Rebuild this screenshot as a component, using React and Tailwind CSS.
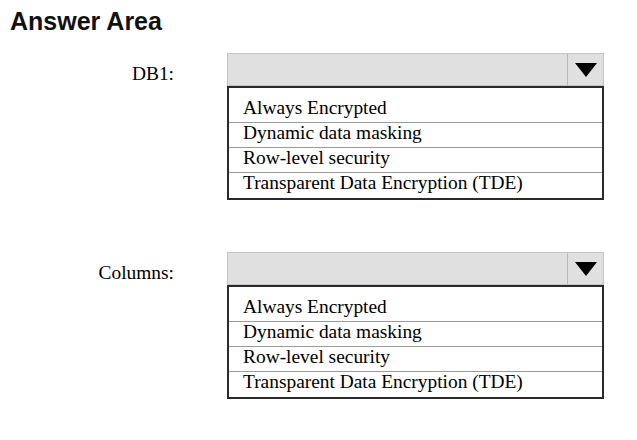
import React from 'react'

const OPTIONS = [
  'Always Encrypted',
  'Dynamic data masking',
  'Row-level security',
  'Transparent Data Encryption (TDE)',
]

function Dropdown() {
  return (
    <div className="w-[377px]">
      <div className="flex h-[33px] border border-[#c4c4c4] bg-[#e0e0e0]">
        <div className="flex-1" />
        <div className="flex w-[36px] items-center justify-center border-l border-[#b8b8b8]">
          <svg width="22" height="14" viewBox="0 0 22 14">
            <polygon points="0,0 22,0 11,14" fill="#000" />
          </svg>
        </div>
      </div>
      <div className="border-2 border-[#2a2a2a] pt-[10px]">
        {OPTIONS.map((opt, i) => (
          <div
            key={opt}
            className={
              'h-[25px] pl-[14px] text-[19.4px] leading-[20px] text-black ' +
              (i < OPTIONS.length - 1 ? 'border-b border-[#9a9a9a]' : '')
            }
          >
            {opt}
          </div>
        ))}
      </div>
    </div>
  )
}

function Row({ label }) {
  return (
    <div className="flex gap-[53px]">
      <div className="w-[174px] pt-[11px] text-right text-[19.4px] leading-[20px] text-black">
        {label}
      </div>
      <Dropdown />
    </div>
  )
}

export default function App() {
  return (
    <div
      className="h-[440px] w-[637px] overflow-hidden bg-white"
      style={{ fontFamily: '"Liberation Serif", "Times New Roman", serif' }}
    >
      <h1
        className="pl-[10px] pt-[9px] text-[25px] font-bold leading-[24px] text-[#111]"
        style={{ fontFamily: '"Liberation Sans", Arial, sans-serif' }}
      >
        Answer Area
      </h1>
      <div className="mt-[20px] flex flex-col gap-[52px]">
        <Row label="DB1:" />
        <Row label="Columns:" />
      </div>
    </div>
  )
}
